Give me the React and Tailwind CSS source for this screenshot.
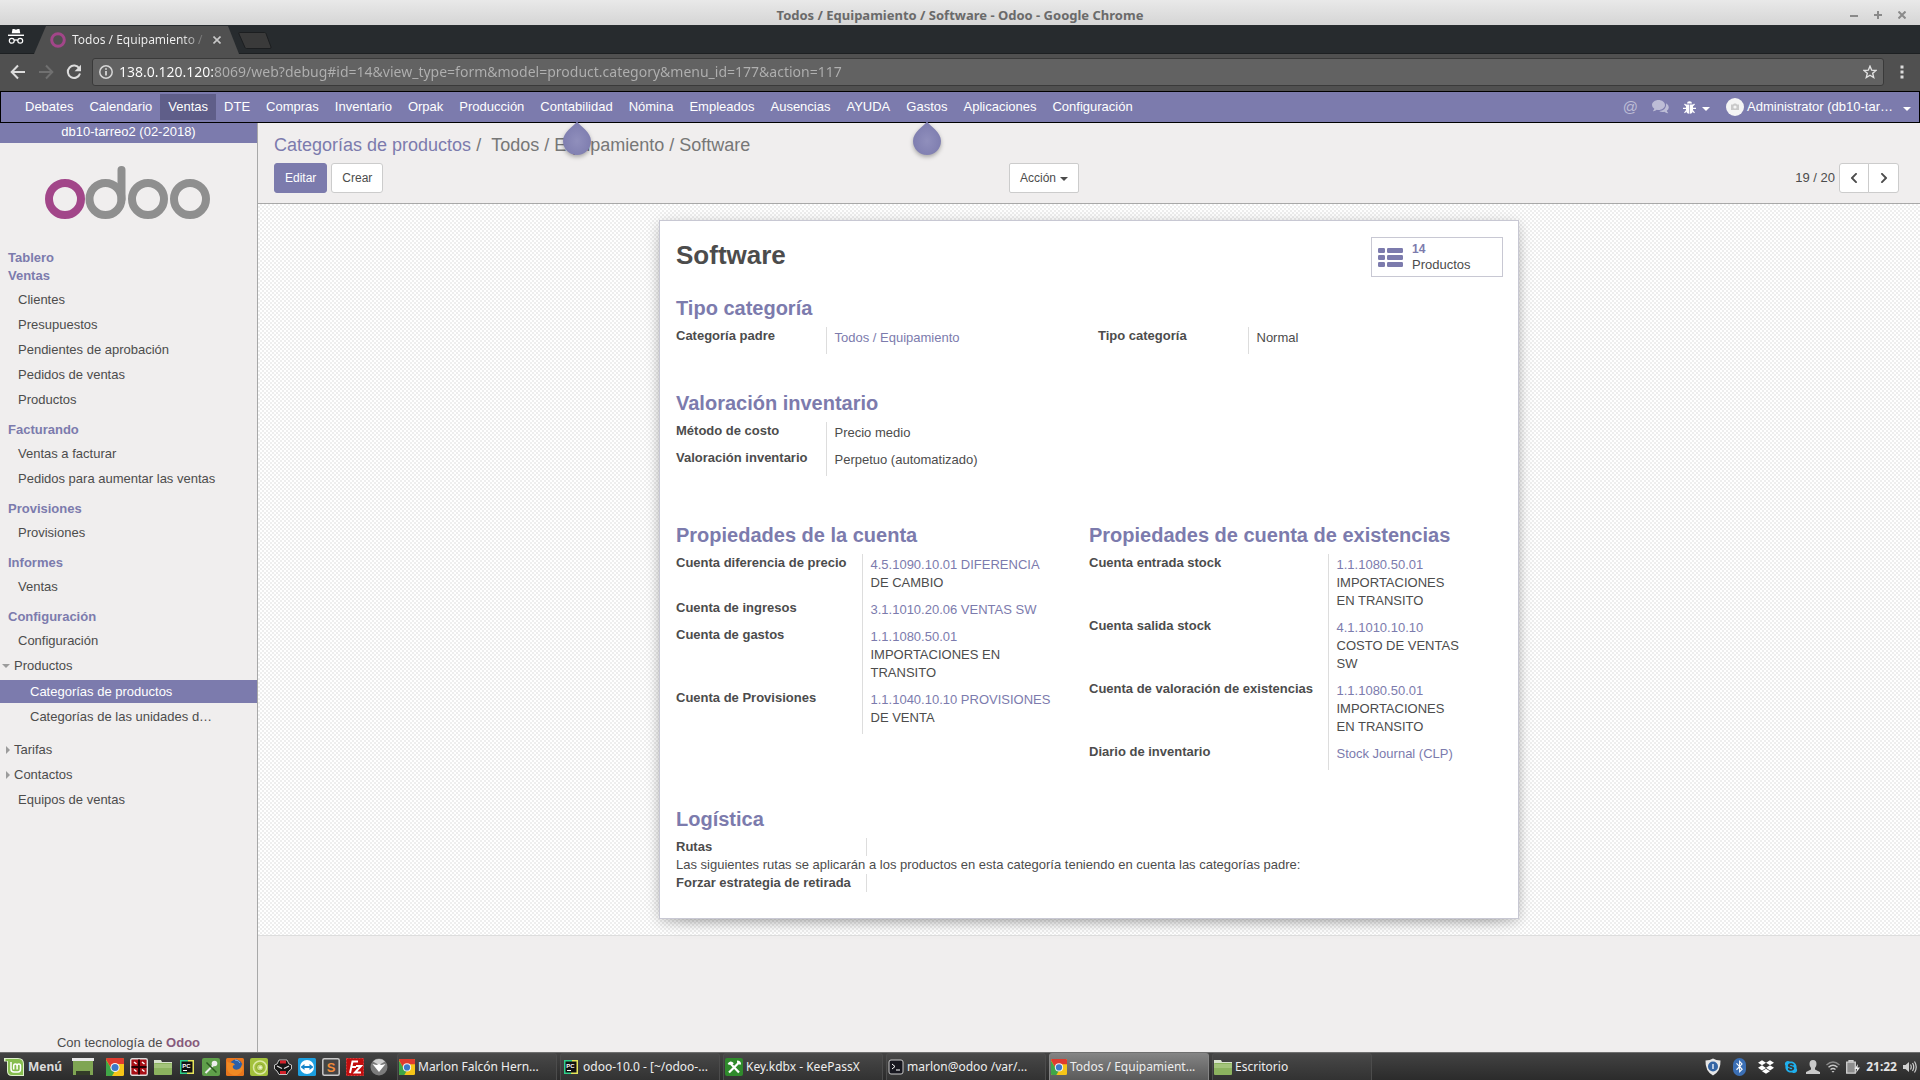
import React from "react";
import { FaChevronLeft, FaChevronRight, FaBluetoothB, FaDropbox, FaSkype } from "react-icons/fa";

const topMenu = [
  "Debates", "Calendario", "Ventas", "DTE", "Compras", "Inventario", "Orpak", "Producción",
  "Contabilidad", "Nómina", "Empleados", "Ausencias", "AYUDA", "Gastos", "Aplicaciones", "Configuración",
];
const tipped = ["Contabilidad", "Gastos"];

const sections = [
  { title: "Ventas", items: ["Clientes", "Presupuestos", "Pendientes de aprobación", "Pedidos de ventas", "Productos"] },
  { title: "Facturando", items: ["Ventas a facturar", "Pedidos para aumentar las ventas"] },
  { title: "Provisiones", items: ["Provisiones"] },
  { title: "Informes", items: ["Ventas"] },
];

function Caret({ className = "" }) {
  return (
    <svg className={className} width="8" height="4" viewBox="0 0 8 4" fill="currentColor" aria-hidden="true">
      <path d="M0 0h8L4 4z" />
    </svg>
  );
}

/* ---------- Window and browser chrome ---------- */

function TitleBar() {
  return (
    <header className="grid h-[25px] shrink-0 grid-cols-[1fr_auto_1fr] items-center bg-linear-to-b from-[#e9e9e9] to-[#d5d5d5] font-['Noto_Sans',sans-serif]">
      <h1 className="col-start-2 pt-1 text-[13px] leading-[20px] font-bold text-[#6a6a6a]">
        Todos / Equipamiento / Software - Odoo - Google Chrome
      </h1>
      <div className="flex items-center justify-end gap-3 pt-1 pr-3 text-[#8a8a8a]">
        <button aria-label="Minimizar" className="grid size-3 place-items-center">
          <svg width="8" height="8" viewBox="0 0 8 8"><path d="M0 5h8" stroke="currentColor" strokeWidth="2" /></svg>
        </button>
        <button aria-label="Maximizar" className="grid size-3 place-items-center">
          <svg width="8" height="8" viewBox="0 0 8 8"><path d="M0 4h8M4 0v8" stroke="currentColor" strokeWidth="2" /></svg>
        </button>
        <button aria-label="Cerrar" className="grid size-3 place-items-center">
          <svg width="8" height="8" viewBox="0 0 8 8"><path d="M.5 .5l7 7M7.500 .5l-7 7" stroke="currentColor" strokeWidth="2" /></svg>
        </button>
      </div>
    </header>
  );
}

function TabStrip() {
  return (
    <div className="flex h-[29px] shrink-0 items-end border-b border-[#1d2022] bg-[#272b2e] pl-2 font-['Noto_Sans',sans-serif]">
      <svg className="mb-2" width="16" height="17" viewBox="0 0 17 17" fill="none" stroke="#fff" strokeWidth="1.300">
        <path d="M4 5l.8-4.500h1.700l2 .7 2-.7h1.700L13 5z" fill="#fff" stroke="none" />
        <path d="M0 7.200h17" strokeWidth="1.500" />
        <circle cx="4" cy="13" r="2.600" />
        <circle cx="13" cy="13" r="2.600" />
        <path d="M6.500 12.600q2-1 4 0" />
      </svg>
      <div className="-mb-px ml-[10px] flex h-7 w-[205px] items-center bg-[#505050] pl-4 [clip-path:polygon(0_100%,12px_0,194px_0,100%_100%)]">
        <svg width="16" height="16" viewBox="0 0 16 16"><circle cx="8" cy="8" r="6.300" fill="none" stroke="#a24689" strokeWidth="3" /></svg>
        <span className="ml-1.5 w-[134px] bg-[linear-gradient(to_right,#f2f2f2_110px,#505050_136px)] bg-clip-text text-[12px] leading-[18px] whitespace-nowrap text-transparent">
          Todos / Equipamiento / S
        </span>
        <button aria-label="Cerrar pestaña" className="ml-[5px] grid size-3 place-items-center text-[#c8c8c8]">
          <svg width="8" height="8" viewBox="0 0 8 8"><path d="M.5 .5l7 7M7.500 .5l-7 7" stroke="currentColor" strokeWidth="1.600" /></svg>
        </button>
      </div>
      <button aria-label="Nueva pestaña" className="mb-1 -ml-px">
        <svg width="34" height="17" viewBox="0 0 34 17"><path d="M1.500 .5h25q1 0 1.500 1l5 13.500q.3 1.500-1 1.500H8.500q-1 0-1.500-1L1 2Q.5 .5 1.500 .5z" fill="#3a3a3a" stroke="#1c1e20" /></svg>
      </button>
    </div>
  );
}

function AddressBar() {
  return (
    <div className="flex h-[37px] shrink-0 items-center bg-[#505050] pb-[2px] pl-[10px] font-['Noto_Sans',sans-serif]">
      <button aria-label="Atrás" className="text-[#dcdcdc]">
        <svg width="16" height="16" viewBox="0 0 16 16" fill="none" stroke="currentColor" strokeWidth="2"><path d="M15 8H2M8 1.500L1.700 8 8 14.500" /></svg>
      </button>
      <button aria-label="Adelante" className="ml-3 text-[#707070]">
        <svg width="16" height="16" viewBox="0 0 16 16" fill="none" stroke="currentColor" strokeWidth="2"><path d="M1 8h13M8 1.500L14.300 8 8 14.500" /></svg>
      </button>
      <button aria-label="Recargar" className="ml-3 text-[#dcdcdc]">
        <svg width="16" height="16" viewBox="0 0 16 16"><path d="M13.300 4.500A6.200 6.200 0 1 0 14 9.500" fill="none" stroke="currentColor" strokeWidth="2" /><path d="M15 .8v6.400H8.600z" fill="currentColor" /></svg>
      </button>
      <div className="ml-[10px] flex h-7 flex-1 items-center rounded-[3px] border border-[#3a3a3a] bg-[#626262] px-1.5">
        <svg width="14" height="14" viewBox="0 0 14 14" fill="none" stroke="#d6d6d6"><circle cx="7" cy="7" r="6.200" strokeWidth="1.500" /><path d="M7 6v4.500M7 3.200v1.600" strokeWidth="1.800" /></svg>
        <input
          aria-label="Dirección"
          className="ml-[6px] min-w-0 flex-1 bg-[linear-gradient(to_right,#ffffff_95px,#b0b0b0_95px)] bg-clip-text text-[14px] leading-[20px] text-transparent outline-none"
          defaultValue="138.0.120.120:8069/web?debug#id=14&view_type=form&model=product.category&menu_id=177&action=117"
        />
        <button aria-label="Añadir a favoritos">
          <svg width="14" height="14" viewBox="0 0 14 14"><path d="M7 1.200l1.700 4 4.300.3-3.300 2.800 1 4.200L7 10.200l-3.700 2.300 1-4.200L1 5.500l4.300-.3z" fill="none" stroke="#e2e2e2" strokeWidth="1.400" /></svg>
        </button>
      </div>
      <button aria-label="Menú de Chrome" className="mr-[14px] ml-[14px]">
        <svg width="8" height="14" viewBox="0 0 8 14" fill="#dcdcdc"><path d="M2.500 .5h3v3h-3zM2.500 5.500h3v3h-3zM2.500 10.500h3v3h-3z" /></svg>
      </button>
    </div>
  );
}

/* ---------- Odoo ---------- */

function TipDrop() {
  return (
    <svg className="absolute top-full left-1/2 z-10 -translate-x-1/2 drop-shadow-[0_2px_2px_rgba(0,0,0,0.3)]" width="28" height="36" viewBox="0 0 28 36">
      <defs>
        <radialGradient id="tip" cx="50%" cy="58%" r="50%">
          <stop offset="0" stopColor="#908fbc" />
          <stop offset="1" stopColor="#7f7eb0" />
        </radialGradient>
      </defs>
      <path d="M14 1.500C17 6 28 12 28 21a14 14 0 0 1-28 0C0 12 11 6 14 1.500z" fill="url(#tip)" />
    </svg>
  );
}

function NavBar() {
  return (
    <nav className="flex h-8 shrink-0 items-center border border-black bg-[#7c7bad] pr-2 pl-4 text-white">
      <ul className="flex flex-1">
        {topMenu.map((m) => (
          <li key={m} className="relative">
            <a href="#" className={m === "Ventas" ? "block bg-[#5f5e89] px-2 leading-[26px]" : "block px-2 leading-[26px]"}>{m}</a>
            {tipped.includes(m) && <TipDrop />}
          </li>
        ))}
      </ul>
      <button aria-label="Menciones" className="text-[15px] leading-[18px] text-[#bdbdd6]">@</button>
      <button aria-label="Conversaciones" className="ml-[14px] text-[#bdbdd6]">
        <svg width="17" height="14" viewBox="0 0 17 14" fill="currentColor">
          <path d="M6.500 0C10 0 13 2.200 13 5s-3 5-6.500 5q-.9 0-1.700-.2Q3.200 11 1.300 11.200q-.6 0-.2-.5Q2 9.800 2.300 8.700 0 7.300 0 5c0-2.800 3-5 6.500-5z" />
          <path d="M14 3.300q2.800 1.300 2.800 3.900 0 2.100-2 3.500.3 1.100 1.200 2 .4.600-.2.600-1.900-.2-3.500-1.500-3 .6-5.200-.8 6.800-.5 7-6 0-.9-.1-1.700z" />
        </svg>
      </button>
      <button aria-label="Depuración" className="ml-[14px] flex items-center gap-1.5">
        <svg width="13" height="13" viewBox="0 0 13 13" fill="currentColor">
          <path d="M4 2.600a2.500 2.400 0 0 1 5 0zM3 3.500h3.200v9.300Q3 12.400 3 9zM6.800 3.500H10V9q0 3.400-3.200 3.800z" />
          <path d="M3.500 5L1.500 3M9.500 5l2-2M3 7.300H0M10 7.300h3M3.500 9.500l-2 2.300M9.500 9.500l2 2.300" stroke="currentColor" strokeWidth="1.200" />
        </svg>
        <Caret className="mt-1" />
      </button>
      <button className="ml-4 flex items-center">
        <svg width="18" height="18" viewBox="0 0 18 18">
          <circle cx="9" cy="9" r="9" fill="#f4f4f4" />
          <path d="M5 6.500h2l1-1h2l1 1h2V12H5z" fill="#c9c9c9" /><circle cx="9" cy="9" r="1.600" fill="#f4f4f4" />
        </svg>
        <span className="ml-[3px]">Administrator (db10-tar…</span>
        <Caret className="mt-1 ml-[10px]" />
      </button>
    </nav>
  );
}

function Item({ children }) {
  return (
    <li className="mt-[2px] pl-[18px] leading-[23px]"><a href="#">{children}</a></li>
  );
}

function Toggle({ open, children }) {
  return (
    <button aria-expanded={open} className="flex h-[23px] w-full items-center">
      {open ? (
        <Caret className="ml-[2px] text-[#9c9c9c]" />
      ) : (
        <svg className="ml-[6px]" width="4" height="8" viewBox="0 0 4 8" fill="#9c9c9c"><path d="M0 0l4 4-4 4z" /></svg>
      )}
      <span className="ml-1">{children}</span>
    </button>
  );
}

function Sidebar() {
  return (
    <aside className="flex w-[258px] shrink-0 flex-col border-r border-[#a8a8a8]">
      <p className="h-5 bg-[#7c7bad] text-center leading-[18px] text-white">db10-tarreo2 (02-2018)</p>
      <a href="#" aria-label="Odoo" className="mx-auto mt-[22px]">
        <svg width="168" height="56" viewBox="2 0 168 56" fill="none" strokeWidth="8" strokeLinecap="round">
          <g stroke="#8f8f8f">
            <circle cx="62.500" cy="34" r="16" />
            <path d="M78.500 34V5" />
            <circle cx="105" cy="34" r="16" />
            <circle cx="147" cy="34" r="16" />
          </g>
          <circle cx="22" cy="34" r="16" stroke="#a24689" />
        </svg>
      </a>
      <nav className="mt-7">
        <h2 className="pl-2 leading-[18px] font-bold text-[#7c7bad]">Tablero</h2>
        {sections.map((s) => (
          <section key={s.title} className="mb-[10px]">
            <h2 className="pl-2 leading-[18px] font-bold text-[#7c7bad]">{s.title}</h2>
            <ul className="pt-px">{s.items.map((i) => <Item key={i}>{i}</Item>)}</ul>
          </section>
        ))}
        <section>
          <h2 className="pl-2 leading-[18px] font-bold text-[#7c7bad]">Configuración</h2>
          <ul className="pt-px">
            <Item>Configuración</Item>
            <li className="mt-[2px]">
              <Toggle open>Productos</Toggle>
              <ul className="pt-[3px] pb-2">
                <li className="bg-[#7c7bad] pl-[30px] leading-[23px] text-white"><a href="#">Categorías de productos</a></li>
                <li className="mt-[2px] pl-[30px] leading-[23px]"><a href="#">Categorías de las unidades d…</a></li>
              </ul>
            </li>
            <li className="mt-[2px]"><Toggle open={false}>Tarifas</Toggle></li>
            <li className="mt-[2px]"><Toggle open={false}>Contactos</Toggle></li>
            <Item>Equipos de ventas</Item>
          </ul>
        </section>
      </nav>
      <p className="mt-auto text-center leading-[18px]">
        Con tecnología de <a href="#" className="font-bold text-[#875a7b]">Odoo</a>
      </p>
    </aside>
  );
}

function ControlPanel() {
  return (
    <div className="border-b border-[#a8a8a8] px-4 pt-[9px] pb-[10px]">
      <ol className="flex text-[18px] leading-[26px] text-[#777]">
        <li><a href="#" className="text-[#7c7bad]">Categorías de productos</a></li>
        <li className="ml-[5px]">/</li>
        <li className="ml-[10px]">Todos / Equipamiento / Software</li>
      </ol>
      <div className="mt-[5px] grid grid-cols-[1fr_1fr] items-center text-[12px]">
        <div className="flex gap-1">
          <button className="h-[30px] rounded-[3px] border border-[#7c7bad] bg-[#7c7bad] px-[10px] text-white">Editar</button>
          <button className="h-[30px] rounded-[3px] border border-[#ccc] bg-white px-[10px]">Crear</button>
        </div>
        <div className="flex items-center justify-between pr-[5px]">
          <button className="-ml-20 flex h-[30px] items-center gap-1 rounded-[2px] border border-[#ccc] bg-white px-[10px]">
            Acción <Caret className="mt-[2px]" />
          </button>
          <div className="flex items-center gap-1">
            <span className="text-[13px]">19 / 20</span>
            <div className="flex">
              <button aria-label="Anterior" className="grid h-[30px] w-[30px] place-items-center rounded-l-[3px] border border-[#ccc] bg-white"><FaChevronLeft size={12} /></button>
              <button aria-label="Siguiente" className="-ml-px grid h-[30px] w-[31px] place-items-center rounded-r-[3px] border border-[#ccc] bg-white"><FaChevronRight size={12} /></button>
            </div>
          </div>
        </div>
      </div>
    </div>
  );
}

function Heading({ children }) {
  return <h3 className="mb-[7px] text-[20px] leading-[24px] font-bold text-[#7c7bad]">{children}</h3>;
}

function Field({ label, link, text = [] }) {
  return (
    <tr>
      <th scope="row" className="text-left align-top leading-[18px] font-bold whitespace-nowrap">{label}</th>
      <td className="border-l border-[#ddd] pt-[2px] pb-[7px] pl-2 align-top leading-[18px]">
        {link && <a href="#" className="block text-[#7c7bad]">{link}</a>}
        {text.map((t) => <span key={t} className="block">{t}</span>)}
      </td>
    </tr>
  );
}

function Fields({ labelCol, children }) {
  return (
    <table className="w-full table-fixed border-collapse">
      <colgroup><col className={labelCol} /><col /></colgroup>
      <tbody>{children}</tbody>
    </table>
  );
}

function Sheet() {
  return (
    <article className="mx-auto w-full max-w-[860px] border border-[#c8c8d3] bg-white px-4 pt-4 pb-[26px] shadow-[0_5px_20px_-15px_rgba(0,0,0,0.8),0_3px_12px_rgba(0,0,0,0.2)]">
      <div className="flex items-start justify-between">
        <h2 className="text-[26px] leading-[36px] font-bold">Software</h2>
        <button className="-mr-px flex h-10 w-[132px] items-center border border-[#c8c8d3] pl-[6px] text-left leading-[15px]">
          <svg width="25" height="19" viewBox="0 0 25 19" fill="#7c7bad">
            {[0, 7, 14].map((y) => (
              <g key={y}><rect x="0" y={y} width="7" height="5" rx="1.200" /><rect x="9" y={y} width="16" height="5" rx="1.200" /></g>
            ))}
          </svg>
          <span className="ml-[9px]"><span className="block text-[12px] font-bold text-[#7c7bad]">14</span>Productos</span>
        </button>
      </div>

      <div className="mt-[19px]">
        <Heading>Tipo categoría</Heading>
        <div className="grid grid-cols-2 gap-[18px]">
          <Fields labelCol="w-[150px]"><Field label="Categoría padre" link="Todos / Equipamiento" /></Fields>
          <Fields labelCol="w-[150px]"><Field label="Tipo categoría" text={["Normal"]} /></Fields>
        </div>
      </div>

      <div className="mt-[37px]">
        <Heading>Valoración inventario</Heading>
        <Fields labelCol="w-[150px]">
          <Field label="Método de costo" text={["Precio medio"]} />
          <Field label="Valoración inventario" text={["Perpetuo (automatizado)"]} />
        </Fields>
      </div>

      <div className="mt-[47px] grid grid-cols-2">
        <div>
          <Heading>Propiedades de la cuenta</Heading>
          <Fields labelCol="w-[186px]">
            <Field label="Cuenta diferencia de precio" link="4.5.1090.10.01 DIFERENCIA" text={["DE CAMBIO"]} />
            <Field label="Cuenta de ingresos" link="3.1.1010.20.06 VENTAS SW" />
            <Field label="Cuenta de gastos" link="1.1.1080.50.01" text={["IMPORTACIONES EN", "TRANSITO"]} />
            <Field label="Cuenta de Provisiones" link="1.1.1040.10.10 PROVISIONES" text={["DE VENTA"]} />
          </Fields>
        </div>
        <div>
          <Heading>Propiedades de cuenta de existencias</Heading>
          <Fields labelCol="w-[239px]">
            <Field label="Cuenta entrada stock" link="1.1.1080.50.01" text={["IMPORTACIONES", "EN TRANSITO"]} />
            <Field label="Cuenta salida stock" link="4.1.1010.10.10" text={["COSTO DE VENTAS", "SW"]} />
            <Field label="Cuenta de valoración de existencias" link="1.1.1080.50.01" text={["IMPORTACIONES", "EN TRANSITO"]} />
            <Field label="Diario de inventario" link="Stock Journal (CLP)" />
          </Fields>
        </div>
      </div>

      <div className="mt-[37px] leading-[18px]">
        <Heading>Logística</Heading>
        <div className="w-[191px] border-r border-[#ddd] font-bold">Rutas</div>
        <p>Las siguientes rutas se aplicarán a los productos en esta categoría teniendo en cuenta las categorías padre:</p>
        <div className="w-[191px] border-r border-[#ddd] font-bold">Forzar estrategia de retirada</div>
      </div>
    </article>
  );
}

/* ---------- Desktop taskbar ---------- */

function Chrome({ size = 18 }) {
  return (
    <svg width={size} height={size} viewBox="0 0 18 18">
      <rect width="18" height="18" rx="1.500" fill="#f5c518" />
      <path d="M0 1.500Q0 0 1.500 0h15Q18 0 18 1.500V6H9L5.500 11z" fill="#de3b2f" />
      <path d="M0 2l5.500 9L9 13l-3 5H1.500Q0 18 0 16.500z" fill="#3fa648" />
      <circle cx="9" cy="9.500" r="4.600" fill="#f4f4f4" />
      <circle cx="9" cy="9.500" r="3.500" fill="#3c78c8" />
    </svg>
  );
}

function Folder() {
  return (
    <svg width="18" height="18" viewBox="0 0 18 18">
      <path d="M0 2h7l1 2h10v4H0z" fill="#d9e3cd" /><rect y="5" width="18" height="12" rx="1" fill="#8cb35f" /><path d="M0 6h18v4H0z" fill="#a3c47a" />
    </svg>
  );
}

function PyCharm() {
  return (
    <svg width="18" height="18" viewBox="0 0 18 18">
      <rect x="2" y="2" width="14" height="14" fill="#2fd08a" /><path d="M10 2h6v14H9z" fill="#e6e55a" /><rect x="3.500" y="3.500" width="11" height="11" fill="#111" />
      <text x="4.300" y="9.500" fontSize="6" fontWeight="700" fill="#fff" fontFamily="Liberation Sans, sans-serif">PC</text>
      <path d="M5 12.500h4" stroke="#fff" />
    </svg>
  );
}

function KeePass({ dark = false }) {
  return (
    <svg width="18" height="18" viewBox="0 0 18 18">
      <rect width="18" height="18" rx="2" fill={dark ? "#2f8a2c" : "#5f9f4a"} />
      {dark ? (
        <path d="M4 14.500L13.500 5M5 5l9 9.500M3.500 6.500Q5.500 3 8 6M12 3.500q3 0 3 3" stroke="#fff" strokeWidth="2.200" fill="none" />
      ) : (
        <g>
          <path d="M3.500 15L11 7.500" stroke="#eee" strokeWidth="2" />
          <path d="M4.500 4.500L14.500 14.500" stroke="#2c5a20" strokeWidth="1.500" />
          <circle cx="12.500" cy="5.500" r="2.800" fill="#eee" />
        </g>
      )}
    </svg>
  );
}

function Terminal() {
  return (
    <svg width="16" height="16" viewBox="0 0 16 16"><rect x="1" y="1" width="14" height="14" rx="2" fill="#17171f" stroke="#c9c9c9" /><path d="M4 5l3 2.500L4 10M8 11h4" fill="none" stroke="#fff" /></svg>
  );
}

const launchers = [
  ["Google Chrome", <Chrome />],
  ["Terminator", (
    <svg width="18" height="18" viewBox="0 0 18 18"><rect x=".7" y=".7" width="16.600" height="16.600" rx="1.500" fill="#a80f16" stroke="#ddd" strokeWidth="1.400" /><path d="M9 1.500v15M1.500 9h15" stroke="#250003" strokeWidth="2" /><path d="M4 4l2.500 2M12 4l2.500 2M4 11.500l2.500 2M12 11.500l2.500 2" stroke="#fff" strokeWidth="1.500" /></svg>
  )],
  ["Archivos", <Folder />],
  ["PyCharm", <PyCharm />],
  ["KeePassX", <KeePass />],
  ["Firefox", (
    <svg width="18" height="18" viewBox="0 0 18 18"><rect width="18" height="18" rx="1.500" fill="#e8761d" /><circle cx="10" cy="8" r="6.500" fill="#2b5fa8" /><path d="M1 3q1 2 3 1.500Q8 4 9 7q-3 0-2 3 2 3 6 1 3-2 3-6 2 4 0 8-3 5-9 4-6-2-6-8z" fill="#f08a24" /><path d="M9 2q4 0 5 3" stroke="#7fb2e5" fill="none" /></svg>
  )],
  ["Android Studio", (
    <svg width="18" height="18" viewBox="0 0 18 18"><rect width="18" height="18" rx="2" fill="#a3c13c" /><circle cx="10" cy="9.500" r="6.500" fill="none" stroke="#dce9a5" strokeWidth="1.500" /><circle cx="10" cy="9.500" r="3.500" fill="#c6d97d" stroke="#8aa92c" /><circle cx="10.500" cy="9.500" r="1.300" fill="#f2f7d7" /></svg>
  )],
  ["Remmina", (
    <svg width="18" height="18" viewBox="0 0 18 18"><path d="M5 2h8l2 4 2.500 1v4L15 13l-2 3.500H5L3 13 .5 11V7L3 6z" fill="#161616" stroke="#c7c7c7" /><path d="M6 2.500h6v3H6zM6 13h6v3H6z" fill="#d3222a" /><path d="M3 8l5 2.500M15 8l-5 2.500" stroke="#ddd" strokeWidth="1.300" /></svg>
  )],
  ["TeamViewer", (
    <svg width="18" height="18" viewBox="0 0 18 18"><rect width="18" height="18" rx="1.500" fill="#1c9fe0" /><circle cx="9" cy="9" r="7" fill="#fff" /><path d="M2.500 9l4-3v2h5V6l4 3-4 3v-2h-5v2z" fill="#1583c9" /></svg>
  )],
  ["Sublime Text", (
    <svg width="18" height="18" viewBox="0 0 18 18"><rect x=".8" y=".8" width="16.400" height="16.400" rx="1.500" fill="#454545" stroke="#c9c9c9" strokeWidth="1.500" /><text x="4.800" y="14" fontSize="13" fontWeight="700" fill="#f28c3a" fontFamily="Liberation Sans, sans-serif">S</text></svg>
  )],
  ["FileZilla", (
    <svg width="18" height="18" viewBox="0 0 18 18"><rect x=".5" y=".5" width="17" height="17" fill="#c20d0d" stroke="#e03535" strokeDasharray="2 1" /><path d="M4 15L6.500 3.500H12M5 9h5M10 8h5l-6 6.500h6" fill="none" stroke="#fff" strokeWidth="2" /></svg>
  )],
  ["Inkscape", (
    <svg width="18" height="18" viewBox="0 0 18 18"><circle cx="9" cy="9" r="8.500" fill="#7b7b7b" /><path d="M3 3.500A8.500 8.500 0 0 1 15 3.500L9 7z" fill="#cfcfcf" /><path d="M2.500 6l4 1L9 6l2.500 1 4-1L9 14z" fill="#fff" /></svg>
  )],
];

const windows = [
  ["Marlon Falcón Hern...", <Chrome size={16} />],
  ["odoo-10.0 - [~/odoo-...", <PyCharm />],
  ["Key.kdbx - KeePassX", <KeePass dark />],
  ["marlon@odoo /var/...", <Terminal />],
  ["Todos / Equipamient...", <Chrome size={16} />],
  ["Escritorio", <Folder />],
];

function Tray() {
  return (
    <div className="ml-auto flex items-center pr-[3px] text-white">
      <svg width="16" height="18" viewBox="0 0 16 18"><path d="M8 .5q3 2 7.500 2Q16 13 8 17.500 0 13 .5 2.500 5 2.500 8 .5z" fill="#e6e6e6" /><circle cx="8" cy="8.500" r="5" fill="#3465a4" /><path d="M8 6v5" stroke="#dfe8f5" strokeWidth="1.500" /></svg>
      <span className="ml-3 grid h-[18px] w-[13px] place-items-center rounded-full bg-[#3b6fb5]"><FaBluetoothB size={13} /></span>
      <FaDropbox size={16} className="ml-3" />
      <FaSkype size={14} className="ml-[10px] text-[#1fb0ee]" />
      <svg className="ml-2" width="14" height="14" viewBox="0 0 14 14" fill="#c9c9c9"><path d="M7 0q3.500 0 3.500 4 0 2.500-1.500 4v1.500l5 2.500v2H0v-2l5-2.500V8Q3.500 6.500 3.500 4 3.500 0 7 0z" /></svg>
      <svg className="ml-1.5" width="14" height="12" viewBox="0 0 14 12" fill="none" stroke="#c9c9c9" strokeWidth="1.400"><path d="M.5 4Q7-2 13.500 4" stroke="#8a8a8a" /><path d="M2.500 6.300Q7 2.300 11.500 6.300M4.500 8.600Q7 6.300 9.500 8.600" /><path d="M5.500 10h3L7 11.800z" fill="#c9c9c9" stroke="none" /></svg>
      <svg className="ml-1.5" width="14" height="14" viewBox="0 0 14 14"><path d="M.7 2.200h8.600v11H.7zM3 .7h4v1.500H3z" fill="#8d8d8d" stroke="#d0d0d0" strokeWidth="1.300" /><path d="M12 4l-3.500 5H11l-1 4 4-5.500h-2.500z" fill="#eee" /></svg>
      <time className="ml-1.5 text-[12px] font-bold text-[#e4e4e4]">21:22</time>
      <svg className="ml-1.5" width="14" height="14" viewBox="0 0 14 14"><path d="M0 5h2.500L6 2v10L2.500 9H0z" fill="#d0d0d0" /><path d="M7.500 4.500q1.500 2.500 0 5M9.500 3q2.500 4 0 8M11.500 1.500q3.500 5.500 0 11" fill="none" stroke="#d0d0d0" strokeWidth="1.200" /></svg>
    </div>
  );
}

function Taskbar() {
  return (
    <footer className="flex h-7 shrink-0 items-center border-t border-[#6f6f6f] bg-linear-to-b from-[#434343] to-[#2b2b2b] pl-1 font-['Noto_Sans',sans-serif] text-[#eee]">
      <button className="flex items-center gap-1 text-[12px] font-bold text-[#dcdcdc]">
        <svg width="20" height="18" viewBox="0 0 20 18"><path d="M0 0h14q6 0 6 6v12H8q-5 0-5-5V3.500H0z" fill="#dff0cc" /><path d="M1.500 1H14q5 0 5 5v11H8q-4 0-4-4V3H1.500z" fill="#86bd4f" /><path d="M7 4v7q0 3 3 3h4q2.500 0 2.500-3V8q0-2-1.700-2t-1.700 2v3.500M13.100 8q0-2-1.700-2T9.700 8v3.500" fill="none" stroke="#fff" strokeWidth="1.500" /></svg>
        <span className="w-11 text-left">Menú</span>
      </button>
      <button aria-label="Mostrar escritorio" className="mr-3">
        <svg width="22" height="18" viewBox="0 0 22 18"><path d="M0 0h22v3H0z" fill="#e8e8e8" /><path d="M1 3h20v14H1z" fill="#7fa553" /><path d="M4 13h14v4H4z" fill="#333c28" /></svg>
      </button>
      <div className="flex gap-1.5">
        {launchers.map(([name, icon]) => <button key={name} aria-label={name}>{icon}</button>)}
      </div>
      <div className="ml-[9px] flex h-full min-w-0 gap-[3px]">
        {windows.map(([name, icon], i) => (
          <button
            key={name}
            className={
              i === 4
                ? "flex w-40 items-center gap-[3px] rounded-t-[3px] border border-b-0 border-[#858585] bg-linear-to-b from-[#838383] to-[#5a5a5a] pl-px text-[12px] whitespace-nowrap"
                : "flex w-40 items-center gap-[3px] rounded-t-[3px] border border-b-0 border-[#4c4c4c] bg-linear-to-b from-[#484848] to-[#323232] pl-px text-[12px] whitespace-nowrap"
            }
          >
            {icon}
            {name}
          </button>
        ))}
      </div>
      <Tray />
    </footer>
  );
}

export default function App() {
  return (
    <div className="flex min-h-screen flex-col bg-[#f0eeee] font-['Liberation_Sans',Arial,sans-serif] text-[13px] text-[#4c4c4c]">
      <TitleBar />
      <TabStrip />
      <AddressBar />
      <NavBar />
      <div className="flex flex-1">
        <Sidebar />
        <main className="min-w-0 flex-1">
          <ControlPanel />
          <div className="border-b border-[#ddd] bg-[repeating-conic-gradient(#eeeeee_0_25%,#ffffff_0_50%)] bg-size-[4px_4px] py-4">
            <Sheet />
          </div>
        </main>
      </div>
      <Taskbar />
    </div>
  );
}
